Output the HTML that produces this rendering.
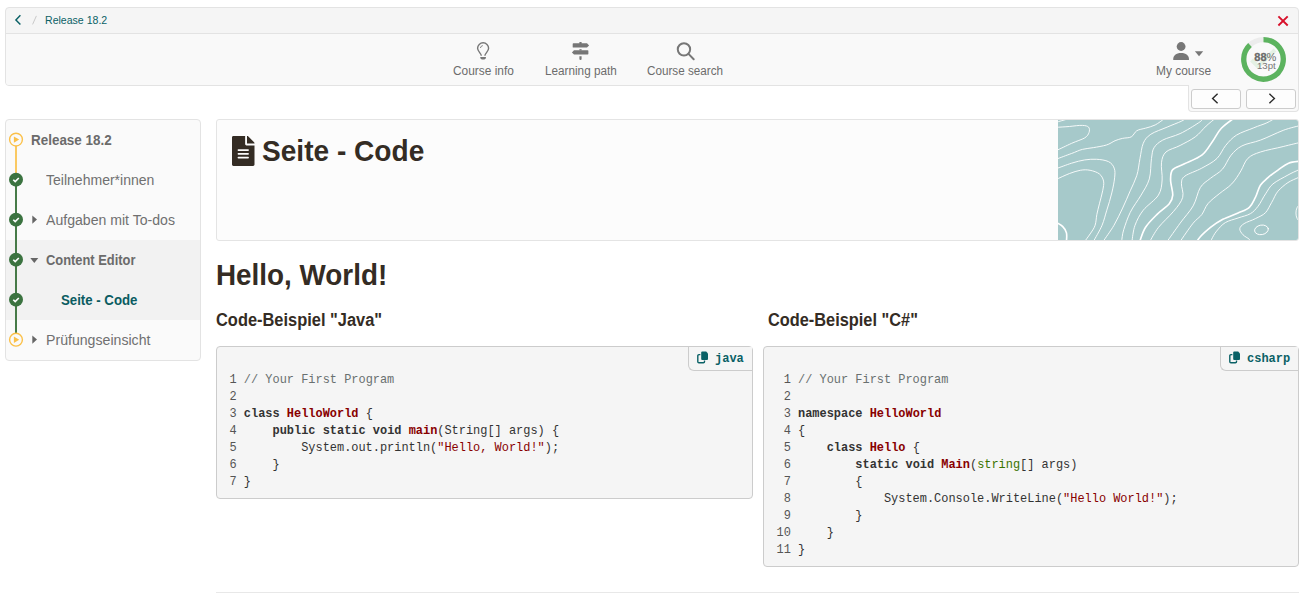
<!DOCTYPE html>
<html><head><meta charset="utf-8"><title>Seite - Code</title>
<style>
*{box-sizing:border-box;margin:0;padding:0}
html,body{width:1309px;height:601px;overflow:hidden;background:#fff;font-family:"Liberation Sans",sans-serif;color:#333}
.abs{position:absolute}
.t{white-space:nowrap;transform-origin:0 0;line-height:1}
#top{left:5px;top:7px;width:1294px;height:79px;background:#f5f5f5;border:1px solid #e3e3e3;border-radius:4px 4px 0 4px}
#nav{left:1188px;top:85px;width:111px;height:27px;background:#f9f9f9;border:1px solid #e3e3e3;border-top:none;border-radius:0 0 4px 4px}
.nbtn{top:89px;height:20px;background:#fdfdfd;border:1px solid #ccc;border-radius:3px}
#menu{left:5px;top:119px;width:196px;height:242px;background:#fafafa;border:1px solid #e3e3e3;border-radius:4px;overflow:hidden}
#hdr{left:216px;top:119px;width:1083px;height:122px;background:#fcfcfc;border:1px solid #e4e4e4;border-radius:3px;overflow:hidden}
.code{background:#f5f5f5;border:1px solid #ccc;border-radius:4px}
pre{font-family:"Liberation Mono",monospace;font-size:11.95px;line-height:17px;color:#333;position:absolute;white-space:pre}
.k{font-weight:bold}.ti{font-weight:bold;color:#880000}.s{color:#880000}.c{color:#697070}.b{color:#397300}.n{color:#555}
.lang{background:#f5f5f5;border:1px solid #ccc;border-top:none;border-right:none;border-radius:0 0 0 6px;height:24px}
.lang span{position:absolute;font-family:"Liberation Mono",monospace;font-weight:bold;font-size:12px;color:#0a6166;line-height:1;white-space:nowrap}
</style></head><body>
<div id="top" class="abs"><div class="abs" style="left:0;top:26px;width:1292px;height:51px;background:#f9f9f9;border-radius:0 0 0 3px"></div><div class="abs" style="left:0;top:25px;width:1292px;height:1px;background:#e3e3e3"></div></div>
<svg class="abs" style="left:13px;top:13px" width="10" height="14" viewBox="0 0 10 14"><path d="M7.4 2.3 L2.9 6.9 L7.4 11.5" fill="none" stroke="#0a6166" stroke-width="1.45"/></svg>
<svg class="abs" style="left:30px;top:14px" width="10" height="12" viewBox="0 0 10 12"><path d="M2.6 10.4 L6.4 1.9" stroke="#c4c4c4" stroke-width="0.9" fill="none"/></svg>
<div class="abs t" style="left:45px;top:14.69px;font-size:11px;font-weight:normal;color:#0a6166;transform:scaleX(0.96);">Release 18.2</div>
<svg class="abs" style="left:1276px;top:14px" width="15" height="15" viewBox="0 0 15 15"><path d="M2.4 2.4 L11.7 11.5 M11.7 2.4 L2.4 11.5" stroke="#d8102a" stroke-width="1.9" fill="none"/></svg>
<div class="abs t" style="left:453px;top:64.84px;font-size:12px;font-weight:normal;color:#6c6c6c;transform:scaleX(0.991);">Course info</div>
<div class="abs t" style="left:544.7px;top:64.84px;font-size:12px;font-weight:normal;color:#6c6c6c;transform:scaleX(0.978);">Learning path</div>
<div class="abs t" style="left:647.4px;top:64.84px;font-size:12px;font-weight:normal;color:#6c6c6c;transform:scaleX(0.974);">Course search</div>
<div class="abs t" style="left:1155.6px;top:64.84px;font-size:12px;font-weight:normal;color:#6c6c6c;transform:scaleX(0.995);">My course</div>
<svg class="abs" style="left:476px;top:41px" width="15" height="20" viewBox="0 0 15 20"><g fill="none" stroke="#777"><path d="M5.3 14.7 C5.3 12.3 1.6 10.6 1.6 7.3 A5.5 5.5 0 0 1 12.6 7.3 C12.6 10.6 8.9 12.3 8.9 14.7" stroke-width="1.4"/><path d="M4.4 7 A2.8 2.8 0 0 1 6.8 4.6" stroke-width="0.9"/></g><path d="M4.3 16 H9.9 V16.6 A2.8 2 0 0 1 4.3 16.6 Z" fill="#777"/></svg>
<svg class="abs" style="left:571px;top:41px" width="19" height="20" viewBox="0 0 19 20"><g fill="#777"><rect x="8.4" y="1" width="2.2" height="2"/><path d="M2.4 2.3 H16 L18.1 4.4 L16 6.6 H2.4 A0.7 0.7 0 0 1 1.7 5.9 V3 A0.7 0.7 0 0 1 2.4 2.3Z"/><rect x="8.4" y="8.2" width="2.2" height="1.3"/><path d="M16.7 9.3 H3 L0.9 11.4 L3 13.5 H16.7 A0.7 0.7 0 0 0 17.4 12.8 V10 A0.7 0.7 0 0 0 16.7 9.3Z"/><path d="M8.4 15.2 H10.6 V18 A1.1 1.1 0 0 1 8.4 18Z"/></g></svg>
<svg class="abs" style="left:675px;top:41px" width="21" height="20" viewBox="0 0 21 20"><g fill="none" stroke="#777" stroke-width="2" stroke-linecap="round"><circle cx="8.95" cy="8.35" r="6.2"/><path d="M13.5 12.9 L18.7 18.2"/></g></svg>
<svg class="abs" style="left:1172px;top:41px" width="34" height="20" viewBox="0 0 34 20"><g fill="#777"><circle cx="9.1" cy="5.5" r="4.4"/><path d="M1.2 18.4 C1.2 14.6 4 12 9.1 12 C14.2 12 17 14.6 17 18.4 A0.6 0.6 0 0 1 16.4 19 H1.8 A0.6 0.6 0 0 1 1.2 18.4Z"/><path d="M22.9 10.2 H31.2 L27.05 15.2Z"/></g></svg>
<svg class="abs" style="left:0;top:0" width="1309" height="120"><circle cx="1263.5" cy="59.4" r="19.75" fill="none" stroke="#ececec" stroke-width="5.3"/><path d="M1263.5 39.65 A19.75 19.75 0 1 1 1249.98 45.00" fill="none" stroke="#5cb35f" stroke-width="5.3"/><path d="M1251.5 60 L1258 66.5 L1275 50" fill="none" stroke="#e4f1e4" stroke-width="4"/></svg>
<div class="abs t" style="left:1254.3px;top:51.59px;font-size:11px;font-weight:bold;color:#6b6b6b;transform:scaleX(1.0);"><span style="-webkit-text-stroke:0.3px #6b6b6b">88</span><span style="font-weight:normal">%</span></div>
<div class="abs t" style="left:1256.7px;top:62.48px;font-size:9px;font-weight:normal;color:#777;transform:scaleX(1.07);">13pt</div>
<div id="nav" class="abs"></div>
<div class="nbtn abs" style="left:1191px;width:50px"></div><div class="nbtn abs" style="left:1246px;width:50px"></div>
<svg class="abs" style="left:1209px;top:92px" width="12" height="13" viewBox="0 0 12 13"><path d="M8.6 1.8 L3.6 6.5 L8.6 11.2" fill="none" stroke="#2a2a2a" stroke-width="1.4"/></svg>
<svg class="abs" style="left:1266px;top:92px" width="12" height="13" viewBox="0 0 12 13"><path d="M3.4 1.8 L8.4 6.5 L3.4 11.2" fill="none" stroke="#2a2a2a" stroke-width="1.4"/></svg>
<div id="menu" class="abs"><div class="abs" style="left:0;top:120px;width:194px;height:80px;background:#f2f2f2"></div></div>
<svg class="abs" style="left:0;top:119px" width="40" height="242"><rect x="15.1" y="27" width="1.8" height="30" fill="#fac451"/><rect x="15.1" y="60" width="1.8" height="154" fill="#336d35"/><circle cx="16" cy="20.6" r="6.4" fill="#fafafa" stroke="#fbc048" stroke-width="1.4"/><path d="M13.9 17.40 L19.2 20.6 L13.9 23.80Z" fill="#fbc048"/><circle cx="16" cy="60.65" r="7" fill="#3b7340"/><path d="M13.3 60.75 L15.2 62.65 L18.8 58.95" fill="none" stroke="#fff" stroke-width="1.6"/><circle cx="16" cy="100.65" r="7" fill="#3b7340"/><path d="M13.3 100.75 L15.2 102.65 L18.8 98.95" fill="none" stroke="#fff" stroke-width="1.6"/><circle cx="16" cy="140.65" r="7" fill="#3b7340"/><path d="M13.3 140.75 L15.2 142.65 L18.8 138.95" fill="none" stroke="#fff" stroke-width="1.6"/><circle cx="16" cy="180.65" r="7" fill="#3b7340"/><path d="M13.3 180.75 L15.2 182.65 L18.8 178.95" fill="none" stroke="#fff" stroke-width="1.6"/><circle cx="16" cy="220.7" r="6.4" fill="#fafafa" stroke="#fbc048" stroke-width="1.4"/><path d="M13.9 217.50 L19.2 220.7 L13.9 223.90Z" fill="#fbc048"/><path d="M32.3 96.4 L37 100.6 L32.3 104.8Z" fill="#666"/><path d="M30.3 139 H38.3 L34.3 144Z" fill="#666"/><path d="M32.3 216.4 L37 220.6 L32.3 224.8Z" fill="#666"/></svg>
<div class="abs t" style="left:30.8px;top:133.15px;font-size:14px;font-weight:bold;color:#6b6b6b;transform:scaleX(0.96);">Release 18.2</div>
<div class="abs t" style="left:46.3px;top:173.15px;font-size:14px;font-weight:normal;color:#707070;transform:scaleX(1.002);">Teilnehmer*innen</div>
<div class="abs t" style="left:46.3px;top:213.15px;font-size:14px;font-weight:normal;color:#707070;transform:scaleX(1.006);">Aufgaben mit To-dos</div>
<div class="abs t" style="left:46.3px;top:253.15px;font-size:14px;font-weight:bold;color:#6b6b6b;transform:scaleX(0.92);">Content Editor</div>
<div class="abs t" style="left:61.3px;top:293.15px;font-size:14px;font-weight:bold;color:#0a5c61;transform:scaleX(0.944);">Seite - Code</div>
<div class="abs t" style="left:46.3px;top:333.15px;font-size:14px;font-weight:normal;color:#707070;transform:scaleX(1.009);">Prüfungseinsicht</div>
<div id="hdr" class="abs"><svg class="abs" style="left:841px;top:0" width="241" height="120" viewBox="37 22 1111 556" preserveAspectRatio="none"><rect x="37" y="22" width="1111" height="556" fill="#a6c9ca"/><g fill="none" stroke="#fff" stroke-linecap="round"><path d="M30 56C40 55 70 54 90 52C110 50 135 46 150 47C165 48 173 50 178 55C183 60 183 72 180 80C177 88 173 97 160 105C147 113 122 120 100 130C78 140 42 158 30 163" stroke-width="4.1"/><path d="M30 32C38 30 72 20 80 18" stroke-width="4.1"/><path d="M30 203C42 199 80 184 100 177C120 170 133 162 150 158C167 154 182 153 200 150C218 147 243 143 260 138C277 133 288 123 300 118C312 113 322 110 335 107C348 104 364 106 375 100C386 94 389 79 400 72C411 65 426 64 440 60C454 56 471 52 485 45C499 38 518 22 525 18" stroke-width="4.1"/><path d="M30 247C42 243 78 229 100 222C122 215 141 210 160 207C179 204 197 203 215 204C233 205 256 208 270 215C284 222 291 232 296 245C301 258 300 271 298 290C296 309 291 335 285 360C279 385 270 415 262 440C254 465 250 486 240 510C230 534 207 572 200 585" stroke-width="4.1"/><path d="M30 297C40 292 72 277 90 270C108 263 124 258 140 255C156 252 170 252 185 255C200 258 218 264 228 272C238 280 244 292 247 305C250 318 246 332 243 350C240 368 232 392 228 410C224 428 219 443 216 460C213 477 213 495 208 510C203 525 193 538 185 550C177 562 164 579 160 585" stroke-width="4.1"/><path d="M245 585C253 572 280 536 295 510C310 484 322 457 335 430C348 403 359 375 370 350C381 325 392 305 400 280C408 255 410 225 415 200C420 175 422 149 430 130C438 111 447 100 465 88C483 76 517 65 540 55C563 45 590 35 605 28C620 21 626 15 630 12" stroke-width="4.1"/><path d="M330 585C332 576 333 552 340 530C347 508 357 477 370 450C383 423 405 396 420 370C435 344 450 323 458 295C466 267 464 224 468 200C472 176 471 164 480 150C489 136 500 126 520 115C540 104 572 98 600 85C628 72 667 47 685 35C703 23 706 16 710 12" stroke-width="4.1"/><path d="M378 585C380 572 383 534 392 510C401 486 412 463 430 440C448 417 486 393 500 370C514 347 515 325 517 300C519 275 511 242 514 220C517 198 521 183 535 170C549 157 578 152 600 140C622 128 650 115 670 100C690 85 704 65 720 50C736 35 758 18 765 12" stroke-width="4.1"/><path d="M460 585C467 574 482 543 500 520C518 497 551 468 570 445C589 422 606 402 612 380C618 358 604 331 606 315C608 299 606 294 622 282C638 270 675 259 700 245C725 231 752 218 770 200C788 182 795 158 810 140C825 122 838 106 860 92C882 78 917 68 940 58C963 48 983 43 1000 35C1017 27 1033 16 1040 12" stroke-width="4.1"/><path d="M540 585C550 571 580 528 600 500C620 472 644 448 660 420C676 392 680 356 693 335C706 314 723 306 740 292C757 278 779 268 795 250C811 232 820 203 835 185C850 167 862 154 885 142C908 130 939 127 971 115C1003 103 1044 82 1075 70C1106 58 1146 50 1160 46" stroke-width="4.1"/><path d="M600 585C610 571 643 521 660 500C677 479 689 475 700 460C711 445 715 426 728 410C741 394 762 379 780 364C798 349 821 336 838 318C855 300 868 278 880 258C892 238 897 215 912 200C927 185 944 179 971 170C998 161 1044 153 1075 145C1106 137 1146 128 1160 124" stroke-width="4.1"/><path d="M1160 248C1157 249 1154 249 1144 254C1134 259 1116 266 1097 277C1078 288 1045 304 1028 318C1011 332 1006 347 994 364C982 381 971 407 959 422C947 437 939 447 924 456C909 465 886 469 867 476C848 483 826 487 809 497C792 507 779 524 768 537C757 550 750 566 745 575C740 584 741 589 740 592" stroke-width="4.1"/><path d="M1160 282C1157 283 1154 284 1144 289C1134 294 1112 302 1097 312C1082 322 1064 337 1051 352C1038 367 1032 388 1022 404C1012 420 1006 438 994 451C982 464 964 470 947 479C930 488 907 494 895 502C883 510 876 517 875 526C874 535 883 546 890 554C897 562 912 568 919 575C926 582 928 591 930 594" stroke-width="4.1"/><path d="M30 497C35 500 50 507 58 515C66 523 73 533 76 545C79 557 76 578 76 585" stroke-width="7.6"/><path d="M412 590C417 578 426 542 440 520C454 498 477 476 495 458C513 440 538 425 550 410C562 395 565 388 566 370C567 352 556 320 556 300C556 280 555 264 566 252C577 240 598 236 620 225C642 214 678 202 700 185C722 168 735 141 750 120C765 99 773 78 790 60C807 42 840 20 850 12" stroke-width="7.6"/><path d="M1160 212C1150 214 1118 215 1100 222C1082 229 1067 243 1051 254C1035 265 1018 277 1005 289C992 301 980 309 970 324C960 339 956 364 947 381C938 398 932 415 919 427C906 439 887 444 867 453C847 462 818 471 797 482C776 493 757 506 740 520C723 534 704 551 693 563C682 575 676 587 672 592" stroke-width="7.6"/><ellipse cx="975" cy="531" rx="32" ry="22" transform="rotate(-10 975 531)" stroke-width="4.1"/><ellipse cx="1151" cy="453" rx="17" ry="35" transform="rotate(0 1151 453)" stroke-width="4.1"/></g></svg></div>
<svg class="abs" style="left:232.1px;top:135.7px" width="22.5" height="30" viewBox="0 0 384 512"><path fill="#342c24" d="M224 136V0H24C10.7 0 0 10.7 0 24v464c0 13.3 10.7 24 24 24h336c13.300 0 24-10.7 24-24V160H248c-13.2 0-24-10.8-24-24zm64 236c0 6.600-5.400 12-12 12H108c-6.600 0-12-5.400-12-12v-8c0-6.600 5.400-12 12-12h168c6.600 0 12 5.400 12 12v8zm0-64c0 6.600-5.400 12-12 12H108c-6.600 0-12-5.400-12-12v-8c0-6.600 5.400-12 12-12h168c6.600 0 12 5.400 12 12v8zm0-72v8c0 6.600-5.400 12-12 12H108c-6.600 0-12-5.400-12-12v-8c0-6.600 5.400-12 12-12h168c6.600 0 12 5.400 12 12zm96-114.100v6.100H256V0h6.100c6.400 0 12.500 2.500 17 7l97.900 98c4.500 4.500 7 10.600 7 16.900z"/></svg>
<div class="abs t" style="left:261.5px;top:136.2px;font-size:30px;font-weight:bold;color:#342c24;transform:scaleX(0.936);">Seite - Code</div>
<div class="abs t" style="left:215.5px;top:259.61px;font-size:30px;font-weight:bold;color:#342c24;transform:scaleX(0.928);">Hello, World!</div>
<div class="abs t" style="left:216px;top:311.36px;font-size:18px;font-weight:bold;color:#342c24;transform:scaleX(0.912);">Code-Beispiel "Java"</div>
<div class="abs t" style="left:767.5px;top:311.36px;font-size:18px;font-weight:bold;color:#342c24;transform:scaleX(0.908);">Code-Beispiel "C#"</div>
<div class="code abs" style="left:216px;top:346px;width:537px;height:153px"></div>
<div class="lang abs" style="left:688px;top:347px;width:64px"></div>
<svg class="abs" style="left:696.5px;top:351px" width="12" height="13" viewBox="0 0 12 13"><path d="M3.4 3.6 H1.9 A1.1 1.1 0 0 0 0.8 4.7 V10.7 A1.1 1.1 0 0 0 1.9 11.8 H6.4 A1.1 1.1 0 0 0 7.5 10.7 V9.6" fill="none" stroke="#0a6166" stroke-width="1.4"/><path d="M5.2 0.6 H9.2 L11 2.4 V8 A1 1 0 0 1 10 9 H5.2 A1 1 0 0 1 4.2 8 V1.6 A1 1 0 0 1 5.2 0.6Z" fill="#0a6166"/></svg>
<div class="lang" style="border:none;background:none;height:0"><span style="left:715px;top:352.8px">java</span></div>
<pre style="left:229.5px;top:371.5px"><span class="n">1</span> <span class="c">// Your First Program</span>
<span class="n">2</span>
<span class="n">3</span> <span class="k">class</span> <span class="ti">HelloWorld</span> {
<span class="n">4</span>     <span class="k">public</span> <span class="k">static</span> <span class="k">void</span> <span class="ti">main</span>(String[] args) {
<span class="n">5</span>         System.out.println(<span class="s">"Hello, World!"</span>);
<span class="n">6</span>     }
<span class="n">7</span> }</pre>
<div class="code abs" style="left:763px;top:346px;width:536px;height:221px"></div>
<div class="lang abs" style="left:1220px;top:347px;width:78px"></div>
<svg class="abs" style="left:1228.5px;top:351px" width="12" height="13" viewBox="0 0 12 13"><path d="M3.4 3.6 H1.9 A1.1 1.1 0 0 0 0.8 4.7 V10.7 A1.1 1.1 0 0 0 1.9 11.8 H6.4 A1.1 1.1 0 0 0 7.5 10.7 V9.6" fill="none" stroke="#0a6166" stroke-width="1.4"/><path d="M5.2 0.6 H9.2 L11 2.4 V8 A1 1 0 0 1 10 9 H5.2 A1 1 0 0 1 4.2 8 V1.6 A1 1 0 0 1 5.2 0.6Z" fill="#0a6166"/></svg>
<div class="lang" style="border:none;background:none;height:0"><span style="left:1247px;top:352.8px">csharp</span></div>
<pre style="left:776.5px;top:371.5px"><span class="n"> 1</span> <span class="c">// Your First Program</span>
<span class="n"> 2</span>
<span class="n"> 3</span> <span class="k">namespace</span> <span class="ti">HelloWorld</span>
<span class="n"> 4</span> {
<span class="n"> 5</span>     <span class="k">class</span> <span class="ti">Hello</span> {
<span class="n"> 6</span>         <span class="k">static</span> <span class="k">void</span> <span class="ti">Main</span>(<span class="b">string</span>[] args)
<span class="n"> 7</span>         {
<span class="n"> 8</span>             System.Console.WriteLine(<span class="s">"Hello World!"</span>);
<span class="n"> 9</span>         }
<span class="n">10</span>     }
<span class="n">11</span> }</pre>
<div class="abs" style="left:216px;top:592px;width:1083px;height:1px;background:#e8e8e8"></div>
</body></html>
